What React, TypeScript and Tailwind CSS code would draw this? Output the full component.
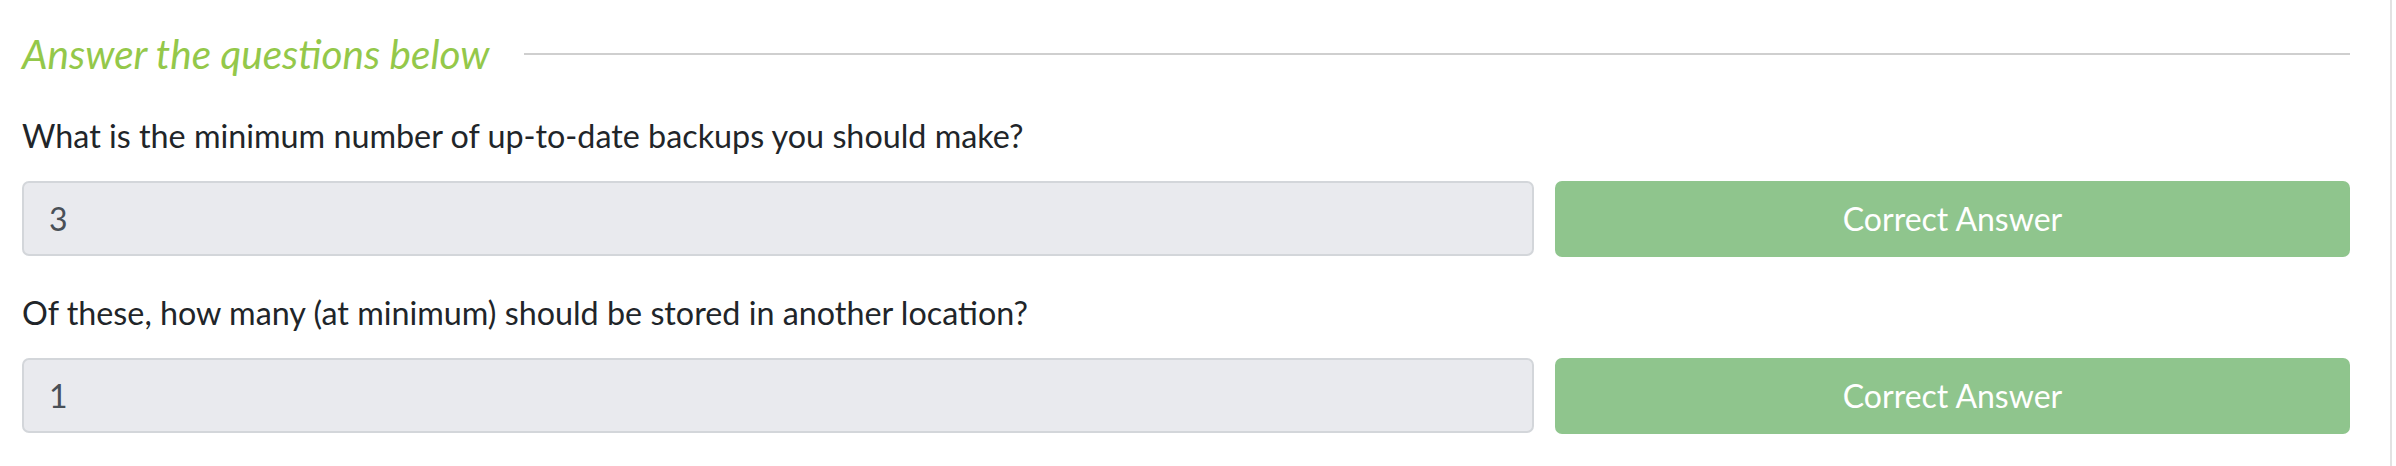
import React from 'react';

const questions = [
  { text: 'What is the minimum number of up-to-date backups you should make?', answer: '3' },
  { text: 'Of these, how many (at minimum) should be stored in another location?', answer: '1' },
];

function QuestionRow({ text, answer }: { text: string; answer: string }) {
  return (
    <div>
      <p className="text-[32.3px] leading-[48px] text-[#212529]">{text}</p>
      <div className="mt-[21px] flex gap-[21px]">
        <input
          readOnly
          value={answer}
          className="h-[75px] flex-1 rounded-[7px] border-2 border-[#d3d6da] bg-[#e9eaee] pl-[25px] text-[32px] text-[#495057] outline-none"
        />
        <button className="h-[76px] w-[795px] rounded-[7px] bg-[#8fc58d] text-[32px] text-white">
          Correct Answer
        </button>
      </div>
    </div>
  );
}

export default function App() {
  return (
    <div className="flex h-[466px] w-[2396px] bg-white font-['Lato',sans-serif]">
      <div className="flex-1 pl-[22px] pr-[40px] pt-[28px]">
        {/* Heading */}
        <div className="flex items-center gap-[34px]">
          <h4 className="text-[40.5px] font-normal italic leading-[52px] text-[#94c84a]">
            Answer the questions below
          </h4>
          <div className="h-[2px] flex-1 bg-[#cfcfcf]" />
        </div>

        <div className="mt-[32px] space-y-[32px]">
          {questions.map((q) => (
            <QuestionRow key={q.answer} text={q.text} answer={q.answer} />
          ))}
        </div>
      </div>
      <div className="w-[2px] bg-[#e2e2e2]" />
      <div className="w-[4px]" />
    </div>
  );
}
